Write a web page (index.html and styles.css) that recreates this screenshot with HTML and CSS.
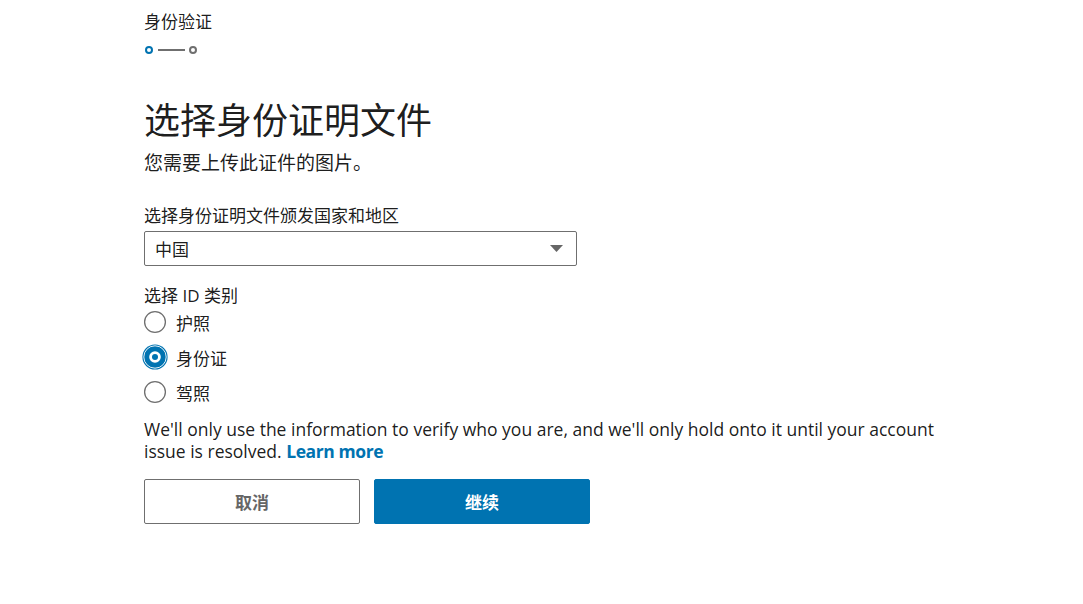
FILE: index.html
```html
<!DOCTYPE html>
<html lang="zh-CN">
<head>
<meta charset="utf-8">
<title>身份验证</title>
<link rel="stylesheet" href="styles.css">
</head>
<body>
<main class="page">
  <div class="step-title">身份验证</div>
  <div class="progress">
    <span class="dot dot-active"></span>
    <span class="bar"></span>
    <span class="dot"></span>
  </div>
  <h1 class="heading">选择身份证明文件</h1>
  <p class="subtitle">您需要上传此证件的图片。</p>

  <label class="field-label">选择身份证明文件颁发国家和地区</label>
  <div class="select">
    <span class="select-value">中国</span>
    <svg class="caret" width="13" height="7" viewBox="0 0 13 7"><path d="M0 0H13L6.5 7Z" fill="#666"/></svg>
  </div>

  <div class="group-label">选择 ID 类别</div>
  <div class="radios">
    <div class="radio">
      <span class="radio-box"><svg width="26" height="26" viewBox="0 0 26 26"><circle cx="13" cy="13" r="10.4" fill="#fff" stroke="#6f6f6f" stroke-width="1.3"/></svg></span>
      <span class="radio-text">护照</span>
    </div>
    <div class="radio">
      <span class="radio-box"><svg width="26" height="26" viewBox="0 0 26 26"><circle cx="13" cy="13" r="12.6" fill="#0073b1"/><circle cx="13" cy="13" r="11.2" fill="none" stroke="#fff" stroke-width="0.9"/><circle cx="13" cy="13" r="5.8" fill="#fff"/><circle cx="13" cy="13" r="3" fill="#0073b1"/></svg></span>
      <span class="radio-text">身份证</span>
    </div>
    <div class="radio">
      <span class="radio-box"><svg width="26" height="26" viewBox="0 0 26 26"><circle cx="13" cy="13" r="10.4" fill="#fff" stroke="#6f6f6f" stroke-width="1.3"/></svg></span>
      <span class="radio-text">驾照</span>
    </div>
  </div>

  <p class="note">We'll only use the information to verify who you are, and we'll only hold onto it until your account issue is resolved. <a class="learn" href="#">Learn more</a></p>

  <div class="actions">
    <button class="btn btn-secondary">取消</button>
    <button class="btn btn-primary">继续</button>
  </div>
</main>
</body>
</html>
```

FILE: styles.css
```css
* { box-sizing: border-box; }
html, body { margin: 0; padding: 0; background: #fff; }
body {
  font-family: "Open Sans", "Noto Sans CJK SC", sans-serif;
  color: rgba(0,0,0,0.9);
  font-size: 17px;
}
.page {
  display: flex;
  flex-direction: column;
  align-items: flex-start;
  padding: 10px 0 0 144px;
}
.step-title {
  font-size: 17px;
  line-height: 24px;
}
.progress {
  display: flex;
  align-items: center;
  margin-top: 12px;
  margin-left: 1px;
  height: 8px;
}
.dot {
  width: 8px;
  height: 8px;
  border-radius: 50%;
  border: 2px solid #6f6f6f;
}
.dot-active { border-color: #0073b1; }
.bar {
  width: 27px;
  height: 2px;
  background: #6f6f6f;
  margin: 0 4px 0 5px;
}
.heading {
  margin: 45px 0 0;
  font-size: 36px;
  line-height: 44px;
  font-weight: 400;
}
.subtitle {
  margin: 8px 0 0;
  font-size: 19px;
  line-height: 24px;
}
.field-label {
  margin-top: 29px;
  font-size: 17px;
  line-height: 24px;
}
.select {
  margin-top: 3px;
  width: 433px;
  height: 35px;
  border: 1px solid #6f6f6f;
  border-radius: 2px;
  display: flex;
  align-items: center;
  justify-content: space-between;
  padding: 0 13px 0 10px;
}
.select-value { font-size: 17px; }
.caret { display: block; }
.group-label {
  margin-top: 19px;
  font-size: 17px;
  line-height: 22px;
}
.radios {
  display: flex;
  flex-direction: column;
  gap: 5px;
}
.radio {
  display: flex;
  align-items: center;
  height: 30px;
  gap: 10px;
}
.radio-box {
  width: 22px;
  height: 22px;
  display: flex;
  align-items: center;
  justify-content: center;
}
.radio-box svg { flex: none; display: block; }
.radio-text { font-size: 17px; }
.note {
  margin: 11px 0 0;
  width: 820px;
  font-size: 17.5px;
  line-height: 22px;
}
.learn {
  color: #0073b1;
  font-weight: 700;
  letter-spacing: -0.4px;
  text-decoration: none;
}
.actions {
  margin-top: 17px;
  display: flex;
  gap: 14px;
}
.btn {
  width: 216px;
  height: 45px;
  border-radius: 2px;
  font-family: "Open Sans", "Noto Sans CJK SC", sans-serif;
  font-size: 17px;
  font-weight: 700;
  cursor: pointer;
}
.btn-secondary {
  background: #fff;
  color: #666;
  border: 1px solid #6f6f6f;
}
.btn-primary {
  background: #0073b1;
  color: #fff;
  border: 1px solid #0073b1;
}
```
